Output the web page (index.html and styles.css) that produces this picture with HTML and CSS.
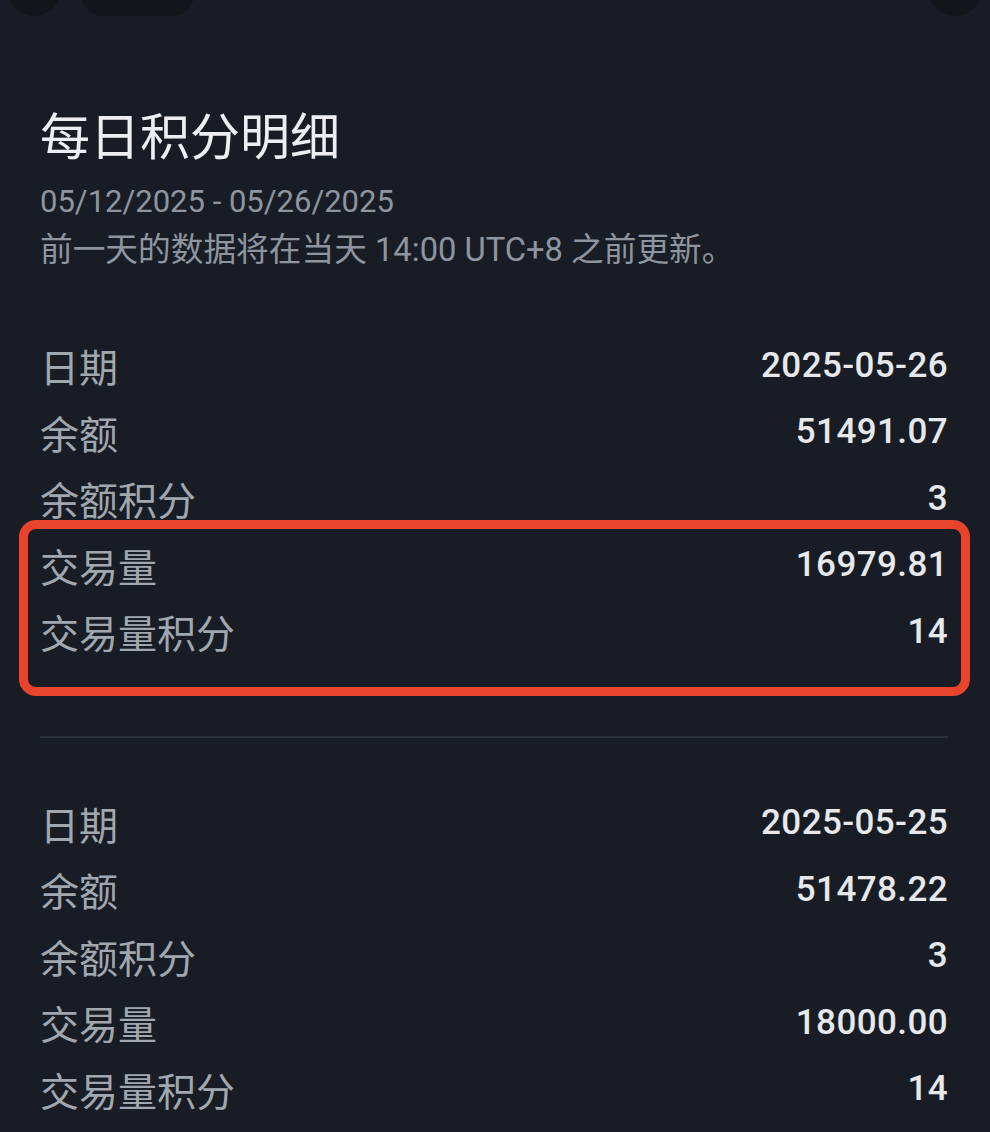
FILE: index.html
```html
<!DOCTYPE html>
<html lang="zh-CN">
<head>
  <meta charset="UTF-8">
  <meta name="viewport" content="width=device-width, initial-scale=1.0">
  <title>每日积分明细</title>
  <link rel="stylesheet" href="styles.css">
</head>
<body>
  <div class="topbar">
    <div class="topbar-left">
      <span class="round-btn"></span>
      <span class="pill-btn"></span>
    </div>
    <span class="round-btn"></span>
  </div>

  <div class="page">
    <h2 class="title">每日积分明细</h2>
    <div class="range">05/12/2025 - 05/26/2025</div>
    <div class="note">前一天的数据将在当天 14:00 UTC+8 之前更新。</div>

    <div class="group first">
      <div class="row"><span class="label">日期</span><span class="value">2025-05-26</span></div>
      <div class="row"><span class="label">余额</span><span class="value">51491.07</span></div>
      <div class="row"><span class="label">余额积分</span><span class="value">3</span></div>
      <div class="highlight">
        <div class="row"><span class="label">交易量</span><span class="value">16979.81</span></div>
        <div class="row"><span class="label">交易量积分</span><span class="value">14</span></div>
      </div>
    </div>

    <div class="divider"></div>

    <div class="group">
      <div class="row"><span class="label">日期</span><span class="value">2025-05-25</span></div>
      <div class="row"><span class="label">余额</span><span class="value">51478.22</span></div>
      <div class="row"><span class="label">余额积分</span><span class="value">3</span></div>
      <div class="row"><span class="label">交易量</span><span class="value">18000.00</span></div>
      <div class="row"><span class="label">交易量积分</span><span class="value">14</span></div>
    </div>
  </div>
</body>
</html>
```

FILE: styles.css
```css
body {
  margin: 0;
  background-color: #181d25;
  font-family: Roboto, "Noto Sans CJK SC", sans-serif;
  overflow: hidden;
}
.topbar {
  display: flex;
  justify-content: space-between;
  margin-top: -38px;
  height: 54px;
  padding: 0 8px 0 7px;
}
.topbar-left {
  display: flex;
  gap: 20px;
}
.round-btn {
  width: 54px;
  height: 54px;
  border-radius: 50%;
  background-color: #12161b;
}
.pill-btn {
  width: 113px;
  height: 54px;
  border-radius: 22px;
  background-color: #12161b;
}
.page {
  padding: 0 42px 0 40px;
}
.title {
  margin: 92px 0 0;
  font-size: 50px;
  line-height: 60px;
  font-weight: 400;
  color: #eceef1;
}
.range, .note {
  font-size: 31px;
  line-height: 48px;
  color: #8f959e;
}
.range {
  margin-top: 10px;
}
.note {
  font-size: 32.7px;
  line-height: 49px;
}
.group.first {
  margin-top: 57px;
}
.row {
  display: flex;
  justify-content: space-between;
  align-items: center;
  height: 66.5px;
}
.label {
  font-size: 39px;
  color: #a1a7af;
}
.value {
  font-size: 35px;
  font-weight: 500;
  color: #e6e8eb;
  letter-spacing: 0.4px;
}
.highlight {
  margin: -12px -22px -31px -21px;
  padding: 3px 13px 22px 12px;
  border: 9px solid #e8432c;
  border-radius: 17px;
}
.divider {
  height: 2px;
  margin-top: 71px;
  background-color: #2b3139;
}
.divider + .group {
  margin-top: 52px;
}
```
